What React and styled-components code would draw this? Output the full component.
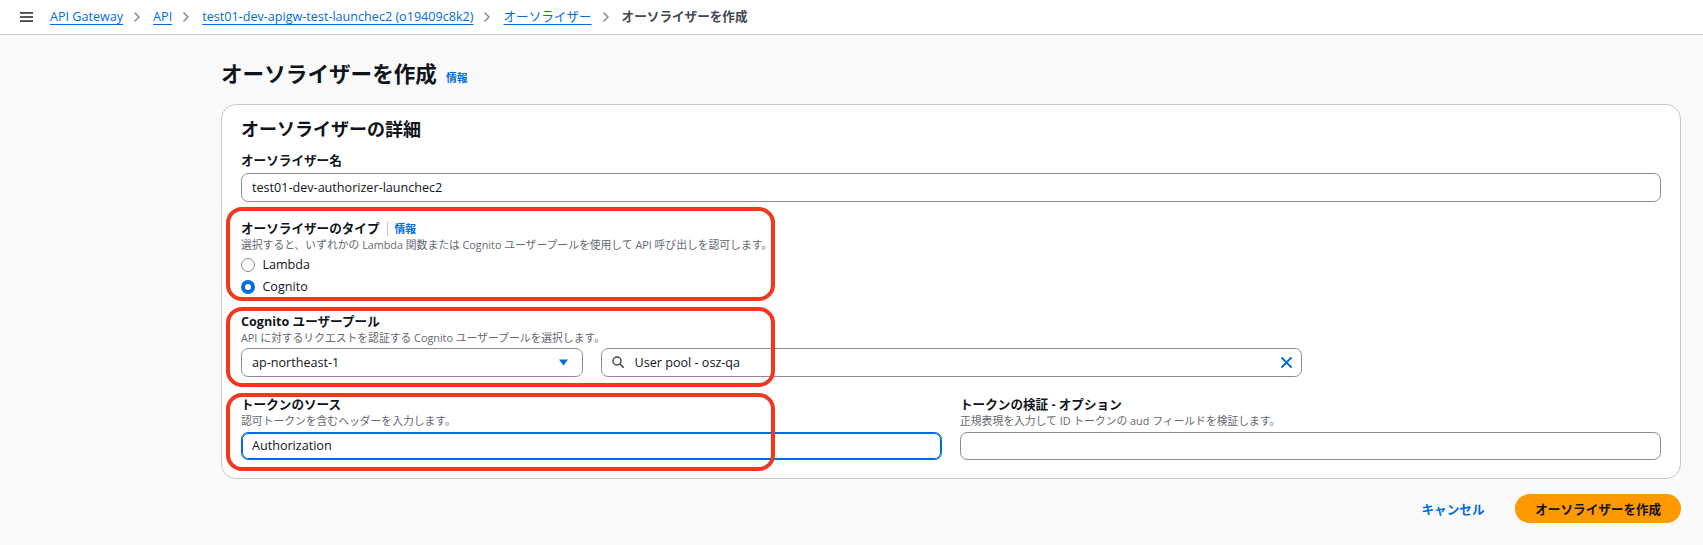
import React from "react";
import styled, { createGlobalStyle } from "styled-components";

const GlobalStyle = createGlobalStyle`
  html, body {
    margin: 0;
    padding: 0;
  }
  body {
    background: #fafafa;
    font-family: "Open Sans", "Noto Sans CJK JP", sans-serif;
    font-size: 12.6px;
    color: #0f141a;
  }
  * {
    box-sizing: border-box;
  }
`;

const TopBar = styled.header`
  height: 35px;
  display: flex;
  align-items: center;
  padding-left: 20px;
  background: #fff;
  border-bottom: 1px solid #c6c6cd;
`;

const Breadcrumbs = styled.nav`
  display: flex;
  align-items: center;
  margin-left: 17px;
  line-height: 18px;
`;

const Crumb = styled.a`
  color: #006ce0;
  text-decoration: underline;
  text-underline-offset: 3px;
  cursor: pointer;
`;

const CurrentCrumb = styled.span`
  color: #424650;
  font-weight: 700;
`;

const Chevron = styled.svg`
  margin: 0 11px 0 9px;
  flex-shrink: 0;
`;

const Main = styled.main`
  padding: 0 22px 20px 221px;
`;

const TitleRow = styled.div`
  display: flex;
  align-items: baseline;
  gap: 9px;
  margin-top: 25px;
`;

const Title = styled.h1`
  margin: 0;
  font-size: 21.6px;
  line-height: 27px;
  font-weight: 700;
`;

const InfoLink = styled.a`
  color: #006ce0;
  font-size: 10.8px;
  font-weight: 700;
  cursor: pointer;
`;

const Card = styled.section`
  margin-top: 17px;
  background: #fff;
  border: 1px solid #c6c6cd;
  border-radius: 15px;
  padding: 13px 19px 18px;
`;

const CardTitle = styled.h2`
  margin: 0;
  font-size: 18px;
  line-height: 22px;
  font-weight: 700;
`;

const Field = styled.div`
  position: relative;
  margin-top: ${(p) => p.$gap || 0}px;
`;

const Label = styled.div`
  display: flex;
  align-items: center;
  font-weight: 700;
  line-height: 18px;
`;

const Divider = styled.span`
  width: 1px;
  height: 14px;
  background: #c6c6cd;
  margin: 0 7px;
`;

const Description = styled.div`
  font-size: 10.8px;
  line-height: 14px;
  color: #656871;
`;

const TextInput = styled.input`
  display: block;
  width: 100%;
  height: 28.8px;
  margin-top: ${(p) => p.$gap || 0}px;
  padding: 0 10px;
  border: 1px solid ${(p) => (p.$focused ? "#006ce0" : "#8c8c94")};
  box-shadow: ${(p) => (p.$focused ? "inset 0 0 0 1px #006ce0" : "none")};
  border-radius: 7.2px;
  background: #fff;
  font: inherit;
  color: #0f141a;
  outline: none;
`;

const RadioGroup = styled.div`
  margin-top: 2px;
`;

const RadioRow = styled.label`
  height: 22px;
  display: flex;
  align-items: center;
  gap: 7px;
`;

const RadioDot = styled.span`
  width: 14.4px;
  height: 14.4px;
  border-radius: 50%;
  background: #fff;
  border: ${(p) => (p.$checked ? "4.3px solid #006ce0" : "1.6px solid #8c8c94")};
`;

const ControlGrid = styled.div`
  display: grid;
  grid-template-columns: repeat(4, 1fr);
  column-gap: 18px;
  margin-top: 3px;
`;

const SelectBox = styled.div`
  height: 28.8px;
  display: flex;
  align-items: center;
  justify-content: space-between;
  padding: 0 14px 0 10px;
  border: 1px solid #8c8c94;
  border-radius: 7.2px;
  background: #fff;
`;

const SearchBox = styled.div`
  grid-column: span 2;
  height: 28.8px;
  display: flex;
  align-items: center;
  gap: 11px;
  padding: 0 9px 0 10px;
  border: 1px solid #8c8c94;
  border-radius: 7.2px;
  background: #fff;
`;

const SearchText = styled.span`
  flex: 1;
`;

const TwoColumns = styled.div`
  display: grid;
  grid-template-columns: 1fr 1fr;
  column-gap: 18px;
  margin-top: 19px;
`;

const Highlight = styled.span`
  position: absolute;
  left: -15px;
  top: ${(p) => p.$top}px;
  width: 549px;
  height: ${(p) => p.$height}px;
  border: 4px solid #f4361e;
  border-radius: 16px;
  pointer-events: none;
`;

const Actions = styled.div`
  display: flex;
  justify-content: flex-end;
  align-items: center;
  gap: 11px;
  margin-top: 15px;
`;

const CancelButton = styled.button`
  height: 28.8px;
  padding: 0 20px;
  border: none;
  background: none;
  color: #006ce0;
  font: inherit;
  font-weight: 700;
  cursor: pointer;
`;

const PrimaryButton = styled.button`
  height: 28.8px;
  padding: 0 19.8px;
  border: none;
  border-radius: 20px;
  background: #ff9900;
  color: #0f141a;
  font: inherit;
  font-weight: 700;
  cursor: pointer;
`;

const ChevronIcon = () => (
  <Chevron width="10" height="12" viewBox="0 0 10 12">
    <polyline points="3,2 7,6 3,10" fill="none" stroke="#8c8c94" strokeWidth="1.6" strokeLinecap="round" strokeLinejoin="round" />
  </Chevron>
);

const MenuIcon = () => (
  <svg width="13" height="12" viewBox="0 0 13 12">
    <rect x="0" y="1" width="13" height="1.8" fill="#424650" />
    <rect x="0" y="5.1" width="13" height="1.8" fill="#424650" />
    <rect x="0" y="9.2" width="13" height="1.8" fill="#424650" />
  </svg>
);

const crumbs = ["API Gateway", "API", "test01-dev-apigw-test-launchec2 (o19409c8k2)", "オーソライザー"];

const App = () => {
  return (
    <>
      <GlobalStyle />
      <TopBar>
        <MenuIcon />
        <Breadcrumbs>
          {crumbs.map((c) => (
            <React.Fragment key={c}>
              <Crumb>{c}</Crumb>
              <ChevronIcon />
            </React.Fragment>
          ))}
          <CurrentCrumb>オーソライザーを作成</CurrentCrumb>
        </Breadcrumbs>
      </TopBar>

      <Main>
        <TitleRow>
          <Title>オーソライザーを作成</Title>
          <InfoLink>情報</InfoLink>
        </TitleRow>

        <Card>
          <CardTitle>オーソライザーの詳細</CardTitle>

          <Field $gap={12}>
            <Label>オーソライザー名</Label>
            <TextInput $gap={3} readOnly value="test01-dev-authorizer-launchec2" />
          </Field>

          <Field $gap={18}>
            <Highlight $top={-13} $height={94} />
            <Label>
              オーソライザーのタイプ
              <Divider />
              <InfoLink>情報</InfoLink>
            </Label>
            <Description>
              選択すると、いずれかの Lambda 関数または Cognito ユーザープールを使用して API 呼び出しを認可します。
            </Description>
            <RadioGroup>
              <RadioRow>
                <RadioDot />
                Lambda
              </RadioRow>
              <RadioRow>
                <RadioDot $checked />
                Cognito
              </RadioRow>
            </RadioGroup>
          </Field>

          <Field $gap={15}>
            <Highlight $top={-6} $height={80} />
            <Label>Cognito ユーザープール</Label>
            <Description>API に対するリクエストを認証する Cognito ユーザープールを選択します。</Description>
            <ControlGrid>
              <SelectBox>
                <span>ap-northeast-1</span>
                <svg width="9" height="7" viewBox="0 0 9 7">
                  <polygon points="0,0.5 9,0.5 4.5,6.5" fill="#006ce0" />
                </svg>
              </SelectBox>
              <SearchBox>
                <svg width="12" height="12" viewBox="0 0 12 12">
                  <circle cx="5" cy="5" r="4" fill="none" stroke="#424650" strokeWidth="1.5" />
                  <line x1="8" y1="8" x2="11.2" y2="11.2" stroke="#424650" strokeWidth="1.6" strokeLinecap="round" />
                </svg>
                <SearchText>User pool - osz-qa</SearchText>
                <svg width="11" height="11" viewBox="0 0 11 11">
                  <path d="M1 1 L10 10 M10 1 L1 10" stroke="#006ce0" strokeWidth="1.8" strokeLinecap="round" />
                </svg>
              </SearchBox>
            </ControlGrid>
          </Field>

          <TwoColumns>
            <Field>
              <Highlight $top={-3} $height={78} />
              <Label>トークンのソース</Label>
              <Description>認可トークンを含むヘッダーを入力します。</Description>
              <TextInput $gap={4} $focused readOnly value="Authorization" />
            </Field>
            <Field>
              <Label>トークンの検証 - オプション</Label>
              <Description>正規表現を入力して ID トークンの aud フィールドを検証します。</Description>
              <TextInput $gap={4} readOnly value="" />
            </Field>
          </TwoColumns>
        </Card>

        <Actions>
          <CancelButton>キャンセル</CancelButton>
          <PrimaryButton>オーソライザーを作成</PrimaryButton>
        </Actions>
      </Main>
    </>
  );
};

export default App;
